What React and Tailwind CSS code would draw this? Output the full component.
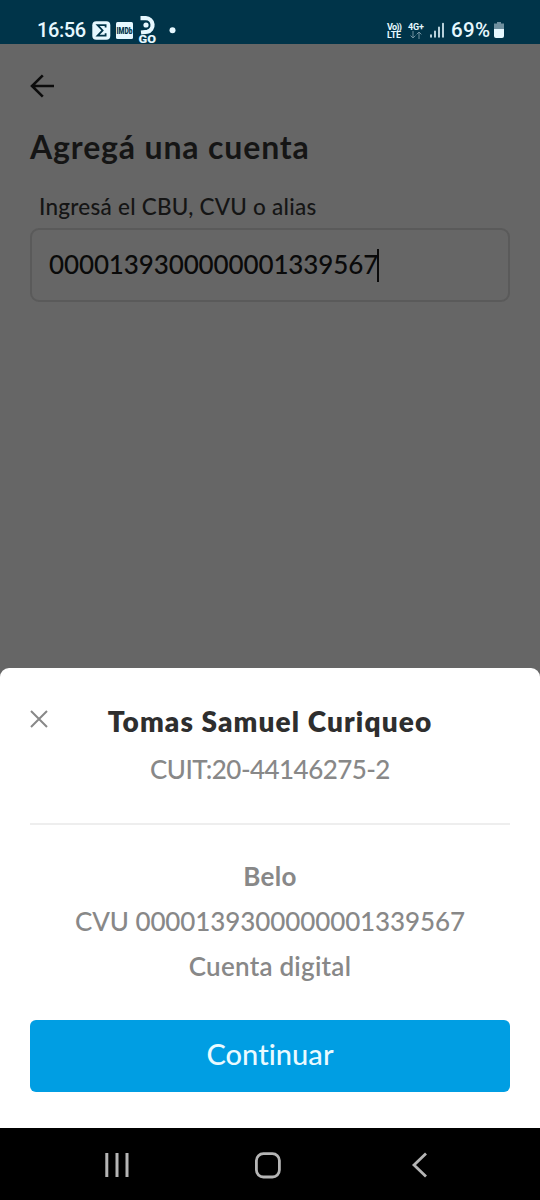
import { useState } from 'react';

const account = {
  holder: 'Tomas Samuel Curiqueo',
  cuit: '20-44146275-2',
  bank: 'Belo',
  cvu: '0000139300000001339567',
  type: 'Cuenta digital',
};

// --- Android status bar ---
function StatusBar() {
  return (
    <div className="h-11 shrink-0 bg-[#003449] flex items-start justify-between pl-[37px] pr-[36px] text-[#e6f8ff]">
      <div className="flex items-start">
        <span className="mt-[18px] w-[49px] font-[Roboto] text-[20px] leading-6 font-medium tracking-[-0.4px] whitespace-nowrap">
          16:56
        </span>
        <svg className="ml-1.5 mt-3.5" width="85" height="30" viewBox="92 14 85 30">
          <rect x="92.3" y="21.3" width="18" height="18.4" rx="4" fill="#e6f8ff" />
          <path
            d="M105.6 27.6v-2.4h-8l5 5.2-5 5.2h8v-2.4"
            fill="none"
            stroke="#003449"
            strokeWidth="1.8"
          />
          <rect x="116" y="22" width="17" height="17" rx="1.5" fill="#e6f8ff" />
          <text
            x="116.5"
            y="33.8"
            fontSize="9"
            fontWeight="900"
            fontFamily="Roboto, sans-serif"
            fill="#003449"
            textLength="16"
            lengthAdjust="spacingAndGlyphs"
          >
            IMDb
          </text>
          <path
            d="M140.5 18.2h5.4a6.9 6.9 0 0 1 1.4 13.6l-6.3.7"
            fill="none"
            stroke="#e6f8ff"
            strokeWidth="4.2"
          />
          <circle cx="146" cy="25" r="2.6" fill="#e6f8ff" />
          <text
            x="138.5"
            y="43.4"
            fontSize="10"
            fontWeight="900"
            fontFamily="Roboto, sans-serif"
            fill="#e6f8ff"
            textLength="17.5"
            lengthAdjust="spacingAndGlyphs"
          >
            GO
          </text>
          <circle cx="172.5" cy="30.3" r="3" fill="#e6f8ff" />
        </svg>
      </div>
      <div className="flex items-start">
        <div className="mt-[23px] w-[16px] font-[Roboto] text-[9px] leading-[8px] font-bold whitespace-nowrap">
          <div className="tracking-[-0.7px]">Vo))</div>
          <div className="tracking-[-0.2px]">LTE</div>
        </div>
        <div className="ml-[5px] mt-[23px] w-[17px] font-[Roboto] text-[9px] leading-[8px] font-bold tracking-[-0.2px] whitespace-nowrap">
          4G+
          <svg className="ml-[2px]" width="12" height="8" viewBox="0 0 12 8">
            <path
              d="M3 0v7M.6 4.6 3 7l2.4-2.4M9 8V1M6.6 3.4 9 1l2.4 2.4"
              fill="none"
              stroke="#6f909f"
              strokeWidth="1"
            />
          </svg>
        </div>
        <svg className="ml-[5px] mt-[22px]" width="14" height="16" viewBox="0 0 14 16">
          <path
            d="M1 13V15M5 9.3V15M9 5.3V15M13 1.5v13.5"
            stroke="#e6f8ff"
            strokeWidth="1.6"
            strokeLinecap="round"
          />
        </svg>
        <span className="ml-[7px] mt-[18px] w-[41px] font-[Roboto] text-[20.5px] leading-6 font-medium tracking-[0.3px] whitespace-nowrap">
          69%
        </span>
        <svg className="ml-[2px] mt-[22px]" width="10" height="16" viewBox="0 0 10 16">
          <path d="M3 0h4v1.5h3V8H0V1.5h3z" fill="#6f909f" />
          <path d="M0 7h10v7a2 2 0 0 1-2 2H2a2 2 0 0 1-2-2z" fill="#e6f8ff" />
        </svg>
      </div>
    </div>
  );
}

// --- Android navigation bar ---
function NavBar() {
  return (
    <div className="h-[72px] shrink-0 bg-black flex items-start pt-6 pl-[105px]">
      <svg width="24" height="26" viewBox="0 0 24 26">
        <path d="M1.8 1v24M12 1v24M22 1v24" stroke="#b5b5b5" strokeWidth="3" />
      </svg>
      <svg className="ml-[125px]" width="28" height="28" viewBox="0 0 28 28">
        <rect
          x="2.4"
          y="1.6"
          width="23"
          height="23.4"
          rx="7"
          fill="none"
          stroke="#b5b5b5"
          strokeWidth="2.8"
        />
      </svg>
      <svg className="ml-[129px]" width="18" height="28" viewBox="0 0 18 28">
        <path d="M15 1.5 3 13l12 11.5" fill="none" stroke="#b5b5b5" strokeWidth="2.8" />
      </svg>
    </div>
  );
}

export default function App() {
  const [value] = useState(account.cvu);

  return (
    <div className="w-[540px] h-[1200px] overflow-hidden flex flex-col bg-[#666666] font-[Lato,sans-serif]">
      <StatusBar />

      {/* Form, dimmed behind the sheet */}
      <div className="h-[624px] shrink-0 px-[30px] pt-[30px]">
        <svg width="25" height="24" viewBox="0 0 25 24">
          <path
            d="M24 12H2M12.8 1.3 2 12l10.8 10.7"
            fill="none"
            stroke="#0c0c0c"
            strokeWidth="2.6"
          />
        </svg>
        <h1 className="mt-[29px] text-[32px] leading-10 font-bold tracking-[0.85px] text-[#151515] whitespace-nowrap">
          Agregá una cuenta
        </h1>
        <label className="mt-[26px] ml-[9px] block text-[22.5px] leading-7 font-medium tracking-[0.25px] text-[#151515] whitespace-nowrap">
          Ingresá el CBU, CVU o alias
        </label>
        <div className="mt-[7px] h-[74px] rounded-[9px] border-2 border-[#5a5a5a] flex items-center pl-[17px] pb-0.5">
          <span className="text-[26px] leading-8 font-medium tracking-[-0.12px] text-[#0a0a0a] whitespace-nowrap">
            {value}
          </span>
          <span className="-ml-px mt-0.5 w-[1.5px] h-[33px] bg-[#0a0a0a]" />
        </div>
      </div>

      {/* Bottom sheet with the account found */}
      <div className="h-[460px] shrink-0 rounded-t-[9px] bg-white px-[30px] text-center text-[#888888]">
        <div className="flex pt-[33px]">
          <svg className="mt-[9px] w-[18px] shrink-0" width="18" height="18" viewBox="0 0 18 18">
            <path d="m1 1 16 16M17 1 1 17" stroke="#888888" strokeWidth="2" />
          </svg>
          <h2 className="flex-1 mr-[18px] text-[28px] leading-10 font-extrabold tracking-[1.1px] text-[#2e2e2e] whitespace-nowrap">
            {account.holder}
          </h2>
        </div>
        <p className="mt-2 text-[26px] leading-10 font-medium tracking-[-0.55px] whitespace-nowrap">
          CUIT:{account.cuit}
        </p>
        <hr className="mt-[34px] border-t-2 border-[#eeeeee]" />
        <p className="mt-[29px] text-[26px] leading-[45px] font-bold tracking-[0.3px]">
          {account.bank}
        </p>
        <p className="text-[26px] leading-[45px] font-medium tracking-[-0.1px] whitespace-nowrap">
          CVU {account.cvu}
        </p>
        <p className="text-[26px] leading-[45px] font-semibold tracking-[0.25px]">
          {account.type}
        </p>
        <button className="mt-[31px] w-full h-[72px] rounded-md bg-[#009ee3] pb-1 text-[29px] text-[#eafaff] font-medium tracking-[0.05px]">
          Continuar
        </button>
      </div>

      <NavBar />
    </div>
  );
}
